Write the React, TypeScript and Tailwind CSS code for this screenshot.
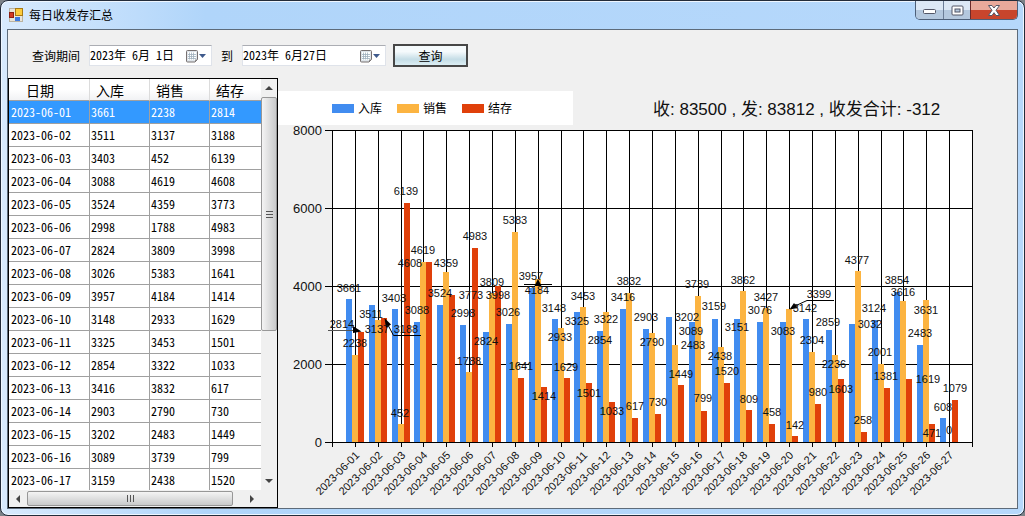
import React from "react";

const UI_FONT = "font-['Noto_Sans_CJK_SC',sans-serif]";
const MONO_FONT = "font-['Noto_Sans_Mono_CJK_SC','DejaVu_Sans_Mono',monospace]";

type Spot = [value: number, x: number, y: number];
type Day = { date: string; values: [Spot, Spot, Spot] };

// Each value carries the centre of its data label in chart units.
const SPOTS: [Spot, Spot, Spot][] = [
  [[3661, 349, 288], [2238, 355, 343], [2814, 342, 324]],
  [[3511, 371, 314], [3137, 377, 329], [3188, 406, 329]],
  [[3403, 394, 298], [452, 400, 413], [6139, 406, 191]],
  [[3088, 417, 310], [4619, 423, 250], [4608, 410, 263]],
  [[3524, 440, 293], [4359, 446, 263], [3773, 471, 295]],
  [[2998, 463, 313], [1788, 469, 361], [4983, 475, 236]],
  [[2824, 486, 341], [3809, 492, 282], [3998, 498, 295]],
  [[3026, 508, 312], [5383, 515, 220], [1641, 521, 366]],
  [[3957, 531, 276], [4184, 537, 290], [1414, 544, 396]],
  [[3148, 554, 308], [2933, 560, 337], [1629, 566, 367]],
  [[3325, 577, 321], [3453, 583, 296], [1501, 589, 393]],
  [[2854, 600, 340], [3322, 606, 319], [1033, 612, 411]],
  [[3416, 623, 297], [3832, 629, 281], [617, 635, 406]],
  [[2903, 646, 317], [2790, 652, 342], [730, 658, 402]],
  [[3202, 687, 317], [2483, 693, 345], [1449, 681, 374]],
  [[3089, 691, 331], [3739, 697, 284], [799, 703, 398]],
  [[3159, 714, 306], [2438, 720, 356], [1520, 727, 371]],
  [[3151, 737, 327], [3862, 743, 280], [809, 749, 399]],
  [[3076, 760, 310], [3427, 766, 297], [458, 772, 412]],
  [[3083, 783, 331], [3399, 819, 294], [142, 795, 425]],
  [[3142, 805, 308], [2304, 812, 340], [980, 818, 392]],
  [[2859, 828, 322], [2236, 834, 364], [1603, 841, 389]],
  [[3032, 870, 324], [4377, 857, 260], [258, 863, 420]],
  [[3124, 874, 308], [2001, 880, 352], [1381, 886, 376]],
  [[3854, 897, 280], [3616, 903, 292], [1619, 928, 379]],
  [[2483, 920, 333], [3631, 926, 310], [471, 932, 433]],
  [[608, 943, 407], [0, 949, 430], [1079, 955, 388]],
];

const DAYS: Day[] = SPOTS.map((values, i) => ({
  date: `2023-06-${String(i + 1).padStart(2, "0")}`,
  values,
}));

const PAGE_ROWS = 17;

const SERIES = [
  { name: "入库", color: "#418cf0", swatch: "bg-[#418cf0]" },
  { name: "销售", color: "#fcb441", swatch: "bg-[#fcb441]" },
  { name: "结存", color: "#e0400a", swatch: "bg-[#e0400a]" },
];

const LEFT = 332;
const RIGHT = 972;
const TOP = 130;
const BOTTOM = 442;
const STEP = (RIGHT - LEFT) / 28;
const BAR = 6;
const yOf = (v: number) => Math.round(BOTTOM - (v * (BOTTOM - TOP)) / 8000);
const xOf = (i: number) => Math.round(LEFT + STEP * i);

function Chart() {
  return (
    <svg
      viewBox="278 125 739 383"
      preserveAspectRatio="xMinYMin meet"
      className="block min-h-0 w-full flex-1 overflow-visible font-['Liberation_Sans',sans-serif]"
      role="img"
      aria-label="每日收发存汇总"
    >
      <rect x={LEFT} y={TOP} width={RIGHT - LEFT} height={BOTTOM - TOP} fill="#fff" />
      <g fill="#000" shapeRendering="crispEdges">
        {[0, 2000, 4000, 6000, 8000].map((v) => (
          <rect key={v} x={LEFT - 7} y={yOf(v)} width={RIGHT - LEFT + 8} height={1} />
        ))}
        {Array.from({ length: 29 }, (_, i) => (
          <rect key={i} x={xOf(i)} y={TOP} width={1} height={BOTTOM - TOP + 5} />
        ))}
      </g>
      <g shapeRendering="crispEdges">
        {DAYS.map((d, i) =>
          d.values.map(([v], s) => (
            <rect
              key={`${i}-${s}`}
              x={xOf(i + 1) + (s - 1) * BAR - 3}
              y={yOf(v)}
              width={BAR}
              height={BOTTOM - yOf(v)}
              fill={SERIES[s].color}
            />
          )),
        )}
      </g>
      <g stroke="#000" fill="none">
        <path d="M328 330.5H354" stroke="#555" />
        <path d="M421 335.5H393.5L388 325" />
        <path d="M524 284.5H552" />
        <path d="M834 300.5H807L795 306" />
      </g>
      <g fill="#000">
        <path d="M353 326L361.500 331.500L353 333Z" />
        <path d="M384.500 318L391 324.500L386 328Z" />
        <path d="M538 279L541.500 286H534.500Z" />
        <path d="M789.500 309.500L794 303L798 308Z" />
      </g>
      <g className="text-[11px]" fill="#111" textAnchor="middle">
        {DAYS.map((d) =>
          d.values.map(([v, x, y], s) => (
            <text key={`${d.date}-${s}`} x={x} y={y + 4}>
              {v}
            </text>
          )),
        )}
      </g>
      <g className="text-[13px]" fill="#111" textAnchor="end">
        {[0, 2000, 4000, 6000, 8000].map((v) => (
          <text key={v} x={322} y={yOf(v) + 5}>
            {v}
          </text>
        ))}
      </g>
      <g className="text-[11px]" fill="#111" textAnchor="end">
        {DAYS.map((d, i) => (
          <text key={d.date} transform={`translate(${xOf(i + 1) + 5} 456) rotate(-45)`}>
            {d.date}
          </text>
        ))}
      </g>
    </svg>
  );
}

function AppIcon() {
  return (
    <svg width="14" height="14" viewBox="0 0 14 14" aria-hidden="true">
      <rect x="0.500" y="0.500" width="13" height="13" fill="#e9e4d8" stroke="#b9b3a2" />
      <rect x="6.500" y="0.500" width="7" height="7" fill="#fccb3c" stroke="#a87a14" />
      <rect x="0.500" y="4.500" width="4" height="5" fill="#d33a22" stroke="#8d1f12" />
      <rect x="6" y="9" width="5" height="4" fill="#3f7be0" />
    </svg>
  );
}

function DatePicker({ id, value, label, width }: { id: string; value: string; label: string; width: string }) {
  return (
    <div className={`${width} flex h-[21px] items-center border border-[#dfe3ea] border-t-[#abadb3] bg-white`}>
      <input
        id={id}
        aria-label={label}
        defaultValue={value}
        className={`${MONO_FONT} min-w-0 flex-1 bg-transparent pb-[2px] text-[12px] leading-4 text-black outline-none`}
      />
      <button type="button" aria-label="选择日期" className="flex items-center pr-1">
        <svg width="22" height="14" viewBox="0 0 22 14" aria-hidden="true">
          <path d="M2.500 1.500h9q1 0 1 1v8l-2.500 2.500h-7.500q-1 0-1-1v-9.500q0-1 1-1z" fill="#dfe5ea" stroke="#777070" />
          <rect x="3" y="3" width="8" height="8" fill="#fff" />
          <path d="M3 5.500h8M3 7.500h8M3 9.500h8M4.500 3.500v7M6.500 3.500v7M8.500 3.500v7" stroke="#9fb0bd" strokeWidth="0.800" />
          <path d="M10 12.500V10.500h2.500z" fill="#8a8a8a" />
          <path d="M14 5h7l-3.500 4z" fill="#3f5a8c" />
        </svg>
      </button>
    </div>
  );
}

function Arrow({ d, label, className }: { d: string; label: string; className: string }) {
  return (
    <button type="button" aria-label={label} className={`${className} flex shrink-0 items-center justify-center`}>
      <svg width="8" height="8" viewBox="0 0 8 8" aria-hidden="true">
        <path d={d} fill="#444" />
      </svg>
    </button>
  );
}

function DataGrid() {
  return (
    <section className="flex min-h-0 w-[270px] shrink-0 flex-col border border-black bg-white">
      <div className="flex min-h-0 flex-1">
        <div className="min-w-0 flex-1 overflow-hidden">
          <table className="w-[261px] table-fixed border-separate border-spacing-0 text-black">
            <colgroup>
              <col className="w-[81px]" />
              <col className="w-[60px]" />
              <col className="w-[60px]" />
              <col className="w-[60px]" />
            </colgroup>
            <thead>
              <tr className="h-[22px] text-left text-[14px] leading-5">
                {["日期", "入库", "销售", "结存"].map((h, i) => (
                  <th
                    key={h}
                    scope="col"
                    className={`${i === 0 ? "pl-[17px]" : "pl-[6px]"} border-r border-b border-r-[#dcdcdc] border-b-[#a0a0a0] bg-linear-to-b from-white from-50% to-[#f1f2f4] py-0 font-normal`}
                  >
                    {h}
                  </th>
                ))}
              </tr>
            </thead>
            <tbody>
              {DAYS.slice(0, PAGE_ROWS).map((d, i) => (
                <tr
                  key={d.date}
                  className={`${MONO_FONT} h-[23px] text-[12px] leading-4 ${i === 0 ? "bg-[#3399ff] text-white" : ""}`}
                >
                  <td className="border-r border-b border-[#a0a0a0] py-0 pr-0 pl-[2px]">{d.date}</td>
                  {d.values.map(([v], s) => (
                    <td key={s} className="border-r border-b border-[#a0a0a0] py-0 pr-0 pl-px">
                      {v}
                    </td>
                  ))}
                </tr>
              ))}
            </tbody>
          </table>
        </div>
        <div className="flex w-4 shrink-0 flex-col bg-[#f0f0f0]">
          <Arrow label="向上" className="h-[18px]" d="M0 6L4 2L8 6Z" />
          <div className="flex h-[234px] flex-col items-center justify-center gap-px rounded-xs border border-[#979797] bg-linear-to-r from-[#f4f4f4] to-[#c9cacb]">
            <span className="h-px w-[7px] bg-[#555]" />
            <span className="mt-px h-px w-[7px] bg-[#555]" />
            <span className="mt-px h-px w-[7px] bg-[#555]" />
          </div>
          <div className="flex-1" />
          <Arrow label="向下" className="h-[18px]" d="M0 2L4 6L8 2Z" />
        </div>
      </div>
      <div className="flex h-[17px] shrink-0 bg-[#f0f0f0] pr-4">
        <Arrow label="向左" className="w-[18px]" d="M6 0L2 4L6 8Z" />
        <div className="my-px flex w-[206px] items-center justify-center gap-px rounded-xs border border-[#979797] bg-linear-to-b from-[#f4f4f4] to-[#c9cacb]">
          <span className="h-[7px] w-px bg-[#555]" />
          <span className="ml-px h-[7px] w-px bg-[#555]" />
          <span className="ml-px h-[7px] w-px bg-[#555]" />
        </div>
        <div className="flex-1" />
        <Arrow label="向右" className="w-[18px]" d="M2 0L6 4L2 8Z" />
      </div>
    </section>
  );
}

function TitleBar() {
  return (
    <header className="flex h-7 shrink-0 items-start justify-between">
      <div className="flex h-7 items-center gap-[6px] pl-[2px]">
        <AppIcon />
        <h1 className="text-[12px] leading-4 font-normal text-black">每日收发存汇总</h1>
      </div>
      <div className="flex h-[19px] rounded-b-[5px] border border-t-0 border-[#4d5f78]">
        <button
          type="button"
          aria-label="最小化"
          className="flex w-7 items-center justify-center rounded-bl-[4px] border-r border-[#6b7d96] bg-linear-to-b from-[#dce8f5] from-50% to-[#b4c8de] to-50%"
        >
          <svg width="13" height="13" viewBox="0 0 13 13" aria-hidden="true">
            <rect x="0.500" y="5.500" width="12" height="4" rx="1" fill="#fff" stroke="#535666" />
          </svg>
        </button>
        <button
          type="button"
          aria-label="最大化"
          className="flex w-[27px] items-center justify-center border-r border-[#6b2a2a] bg-linear-to-b from-[#dce8f5] from-50% to-[#b4c8de] to-50%"
        >
          <svg width="13" height="11" viewBox="0 0 13 11" aria-hidden="true">
            <rect x="1" y="1" width="11" height="9" rx="1" fill="#fff" stroke="#535666" />
            <rect x="4" y="4" width="5" height="3" fill="#b4c8de" stroke="#535666" />
          </svg>
        </button>
        <button
          type="button"
          aria-label="关闭"
          className="flex w-[46px] items-center justify-center rounded-br-[4px] bg-linear-to-b from-[#e9a99b] from-50% to-[#c8452c] to-50%"
        >
          <svg width="12" height="11" viewBox="0 0 12 11" aria-hidden="true">
            <path
              d="M0.500 0.500h3.500l2 2.500l2-2.500h3.500l-3.500 4.800l3.500 5.200h-3.500l-2-2.800l-2 2.800h-3.500l3.500-5.200z"
              fill="#fff"
              stroke="#535666"
            />
          </svg>
        </button>
      </div>
    </header>
  );
}

export default function App() {
  return (
    <div className="h-screen bg-[#7c8288]">
      <div
        className={`${UI_FONT} flex h-full flex-col rounded-lg border border-[#232c3a] bg-[#b0d5fa] bg-linear-to-r from-[#d8eafd] via-[#b0d5fa] via-20% to-[#b6d8fb] px-[6px] pb-[6px] shadow-[inset_0_0_0_1px_#eef6ff]`}
      >
        <TitleBar />
        <main className="flex min-h-0 flex-1 flex-col border border-[#5d6b7a] bg-[#f0f0f0]">
          <form className="flex h-12 shrink-0 items-center pt-[3px] pl-6 text-[12px] leading-4 text-black">
            <label htmlFor="from" className="mr-[9px]">
              查询期间
            </label>
            <DatePicker id="from" label="开始日期" value="2023年 6月 1日" width="w-[123px]" />
            <label htmlFor="to" className="mx-[9px]">
              到
            </label>
            <DatePicker id="to" label="结束日期" value="2023年 6月27日" width="w-[144px]" />
            <button
              type="button"
              className="ml-[7px] h-[23px] w-[75px] border-2 border-[#474747] bg-linear-to-b from-[#f5fafc] from-30% via-[#c5dde6] via-70% to-[#dceef4]"
            >
              查询
            </button>
          </form>
          <div className="flex min-h-0 flex-1">
            <DataGrid />
            <section className="flex min-w-0 flex-1 flex-col">
              <div className="mt-[13px] flex h-[34px] shrink-0 items-center">
                <ul className="flex h-full w-[295px] items-center gap-[15px] bg-white pl-[54px] text-[12px] leading-4 text-black">
                  {SERIES.map((s) => (
                    <li key={s.name} className="flex items-center gap-1">
                      <span className={`${s.swatch} h-[9px] w-[22px]`} />
                      {s.name}
                    </li>
                  ))}
                </ul>
                <p className="pt-1 pl-20 font-['Liberation_Sans','Noto_Sans_CJK_SC',sans-serif] text-[17px] leading-6 text-[#111]">
                  收: 83500 , 发: 83812 , 收发合计: -312
                </p>
              </div>
              <Chart />
            </section>
          </div>
        </main>
      </div>
    </div>
  );
}
